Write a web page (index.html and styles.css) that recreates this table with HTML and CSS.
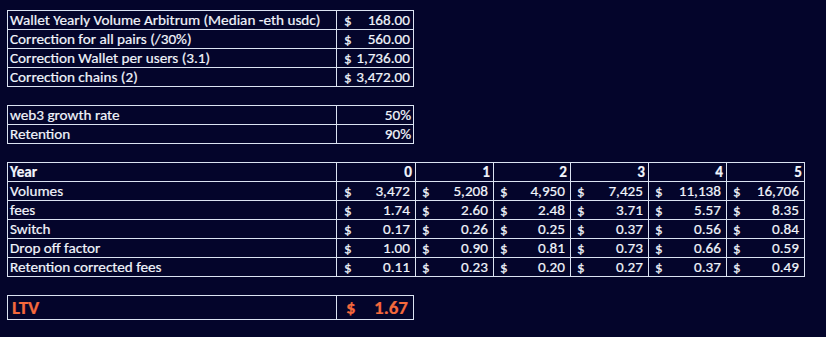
FILE: index.html
```html
<!DOCTYPE html>
<html>
<head>
<meta charset="utf-8">
<link rel="stylesheet" href="styles.css">
</head>
<body>
<div class="sheet">
  <div class="grid two">
    <div class="cell label">Wallet Yearly Volume Arbitrum (Median -eth usdc)</div>
    <div class="cell money top"><span>$</span><span>168.00</span></div>
    <div class="cell label">Correction for all pairs (/30%)</div>
    <div class="cell money top"><span>$</span><span>560.00</span></div>
    <div class="cell label">Correction Wallet per users (3.1)</div>
    <div class="cell money top"><span>$</span><span>1,736.00</span></div>
    <div class="cell label">Correction chains (2)</div>
    <div class="cell money top"><span>$</span><span>3,472.00</span></div>
  </div>

  <div class="grid two">
    <div class="cell label">web3 growth rate</div>
    <div class="cell num">50%</div>
    <div class="cell label">Retention</div>
    <div class="cell num">90%</div>
  </div>

  <div class="grid years">
    <div class="cell label bold">Year</div>
    <div class="cell num head bold">0</div>
    <div class="cell num head bold">1</div>
    <div class="cell num head bold">2</div>
    <div class="cell num head bold">3</div>
    <div class="cell num head bold">4</div>
    <div class="cell num bold">5</div>

    <div class="cell label">Volumes</div>
    <div class="cell money first"><span>$</span><span>3,472</span></div>
    <div class="cell money"><span>$</span><span>5,208</span></div>
    <div class="cell money"><span>$</span><span>4,950</span></div>
    <div class="cell money"><span>$</span><span>7,425</span></div>
    <div class="cell money"><span>$</span><span>11,138</span></div>
    <div class="cell money"><span>$</span><span>16,706</span></div>

    <div class="cell label">fees</div>
    <div class="cell money first"><span>$</span><span>1.74</span></div>
    <div class="cell money"><span>$</span><span>2.60</span></div>
    <div class="cell money"><span>$</span><span>2.48</span></div>
    <div class="cell money"><span>$</span><span>3.71</span></div>
    <div class="cell money"><span>$</span><span>5.57</span></div>
    <div class="cell money"><span>$</span><span>8.35</span></div>

    <div class="cell label">Switch</div>
    <div class="cell money first"><span>$</span><span>0.17</span></div>
    <div class="cell money"><span>$</span><span>0.26</span></div>
    <div class="cell money"><span>$</span><span>0.25</span></div>
    <div class="cell money"><span>$</span><span>0.37</span></div>
    <div class="cell money"><span>$</span><span>0.56</span></div>
    <div class="cell money"><span>$</span><span>0.84</span></div>

    <div class="cell label">Drop off factor</div>
    <div class="cell money first"><span>$</span><span>1.00</span></div>
    <div class="cell money"><span>$</span><span>0.90</span></div>
    <div class="cell money"><span>$</span><span>0.81</span></div>
    <div class="cell money"><span>$</span><span>0.73</span></div>
    <div class="cell money"><span>$</span><span>0.66</span></div>
    <div class="cell money"><span>$</span><span>0.59</span></div>

    <div class="cell label">Retention corrected fees</div>
    <div class="cell money first"><span>$</span><span>0.11</span></div>
    <div class="cell money"><span>$</span><span>0.23</span></div>
    <div class="cell money"><span>$</span><span>0.20</span></div>
    <div class="cell money"><span>$</span><span>0.27</span></div>
    <div class="cell money"><span>$</span><span>0.37</span></div>
    <div class="cell money"><span>$</span><span>0.49</span></div>
  </div>

  <div class="grid two ltv">
    <div class="cell label">LTV</div>
    <div class="cell money top"><span>$</span><span>1.67</span></div>
  </div>
</div>
</body>
</html>
```

FILE: styles.css
```css
html, body {
  margin: 0;
  padding: 0;
  background: #04052b;
}
body {
  width: 826px;
  height: 337px;
  overflow: hidden;
  font-family: "Carlito", "Lato", sans-serif;
  font-size: 15.2px;
  color: #f2f5fc;
  -webkit-text-stroke: 0.2px #f2f5fc;
}
.sheet {
  padding: 10px 0 0 7px;
  display: flex;
  flex-direction: column;
  align-items: flex-start;
  gap: 18px;
}
.grid {
  display: grid;
  border-top: 1px solid #dbe3f2;
  border-left: 1px solid #dbe3f2;
  grid-auto-rows: 19px;
}
.two {
  grid-template-columns: 329px 77px;
}
.years {
  grid-template-columns: 329px 79px 78px 77px 78px 78px 78px;
}
.cell {
  box-sizing: border-box;
  border-right: 1px solid #dbe3f2;
  border-bottom: 1px solid #dbe3f2;
  display: flex;
  align-items: center;
  line-height: 18px;
  white-space: nowrap;
  overflow: hidden;
}
.label {
  padding-left: 2px;
}
.num {
  justify-content: flex-end;
  padding-right: 2px;
}
.num.head {
  padding-right: 3px;
}
.bold {
  font-weight: 700;
}
.money {
  justify-content: space-between;
  padding: 0 5px 0 6px;
}
.money.first {
  padding-left: 7px;
  padding-right: 5px;
}
.money.top {
  padding-left: 7px;
  padding-right: 3px;
}
.ltv {
  grid-auto-rows: 24px;
}
.ltv .cell {
  color: #f4693c;
  -webkit-text-stroke: 0.2px #f4693c;
  font-weight: 700;
  font-size: 19px;
  line-height: 23px;
}
.ltv .label {
  padding-left: 4px;
}
.ltv .money.top {
  padding-left: 9px;
  padding-right: 5px;
}
```
